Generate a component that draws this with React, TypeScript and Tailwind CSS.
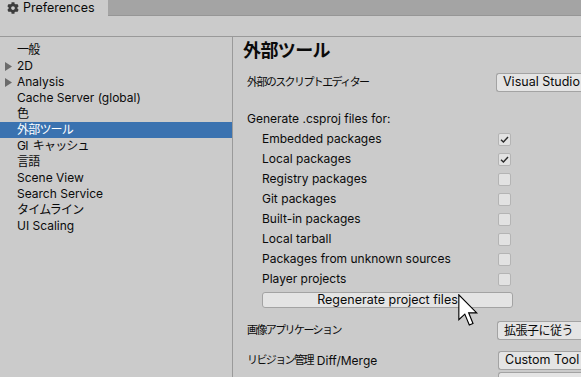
import React from "react";
import { FaCog } from "react-icons/fa";

const font = { fontFamily: "Inter, 'Noto Sans CJK JP', sans-serif" };

type NavItem = { label: string; arrow?: boolean; selected?: boolean; cjk?: boolean };

const navItems: NavItem[] = [
  { label: "一般", cjk: true },
  { label: "2D", arrow: true },
  { label: "Analysis", arrow: true },
  { label: "Cache Server (global)" },
  { label: "色", cjk: true },
  { label: "外部ツール", selected: true, cjk: true },
  { label: "GI  キャッシュ", cjk: true },
  { label: "言語", cjk: true },
  { label: "Scene View" },
  { label: "Search Service" },
  { label: "タイムライン", cjk: true },
  { label: "UI Scaling" },
];

const packages: { label: string; checked: boolean }[] = [
  { label: "Embedded packages", checked: true },
  { label: "Local packages", checked: true },
  { label: "Registry packages", checked: false },
  { label: "Git packages", checked: false },
  { label: "Built-in packages", checked: false },
  { label: "Local tarball", checked: false },
  { label: "Packages from unknown sources", checked: false },
  { label: "Player projects", checked: false },
];

const Checkbox: React.FC<{ checked: boolean }> = ({ checked }) => (
  <div className="w-[13px] h-[13px] rounded-[2px] border border-[#b4b4b4] bg-[#e2e2e2] grid place-items-center">
    {checked && (
      <svg width="9" height="7" viewBox="0 0 9 7">
        <path d="M1 3.8 L3.4 6 L8 1" fill="none" stroke="#2a2a2a" strokeWidth={1.4} />
      </svg>
    )}
  </div>
);

// runs off the right edge of the window, like the reference
const Dropdown: React.FC<{ value: string; cjk?: boolean; width: string }> = ({ value, cjk, width }) => (
  <div
    className={
      "ml-auto h-[19px] shrink-0 rounded-l-[3px] border border-r-0 border-[#a3a3a3] bg-[#e4e4e4] pl-[6px] flex items-center whitespace-nowrap overflow-hidden " +
      width
    }
  >
    <span className={cjk ? "text-[12px] tracking-[-0.5px]" : "text-[12.5px]"}>{value}</span>
  </div>
);

const Cursor = () => (
  <svg
    className="absolute left-[458px] top-[294px]"
    width="21"
    height="33"
    viewBox="0 0 13 20.5"
  >
    <path
      d="M0.5 0.5 L0.5 16 L4.2 12.5 L7 19.3 L9.3 18.3 L6.6 11.7 L11.6 11.7 Z"
      fill="#ffffff"
      stroke="#000000"
      strokeWidth={0.7}
      strokeLinejoin="miter"
    />
  </svg>
);

export default function App() {
  return (
    <div
      className="relative w-[581px] h-[377px] overflow-hidden bg-[#cbcbcb] text-[#0a0a0a] flex flex-col"
      style={font}
    >
      {/* tab strip */}
      <div className="h-[16px] flex bg-[#a4a4a4] shrink-0">
        <div className="w-[108px] h-[16px] bg-[#cbcbcb] flex items-center pl-[7px] gap-[4px]">
          <FaCog className="w-[12px] h-[12px] text-[#3c3c3c]" />
          <span className="text-[12.5px] leading-none">Preferences</span>
        </div>
        <div className="flex-1 border-b border-[#969696]" />
      </div>
      {/* toolbar */}
      <div className="h-[21px] shrink-0 border-b border-[#999999]" />

      <div className="flex flex-1 min-h-0">
        {/* side list */}
        <div className="w-[233px] shrink-0 border-r border-[#9a9a9a] pt-[5px]">
          {navItems.map((item) => (
            <div
              key={item.label}
              className={
                "h-[16px] flex items-center relative pl-[17px] text-[12px] whitespace-pre " +
                (item.selected ? "bg-[#3a72b0] text-white" : "")
              }
            >
              {item.arrow && (
                <svg
                  className="absolute left-[5px] top-[4px]"
                  width="7"
                  height="9"
                  viewBox="0 0 7 9"
                >
                  <path d="M0 0 L7 4.5 L0 9 Z" fill="#6b6b6b" />
                </svg>
              )}
              <span className={item.cjk ? "tracking-[-0.8px]" : ""}>{item.label}</span>
            </div>
          ))}
        </div>

        {/* settings panel */}
        <div className="flex-1 min-w-0 flex flex-col">
          <div className="mt-[1px] h-[24px] pl-[10px] flex items-center text-[18px] font-bold tracking-[-0.6px]">
            外部ツール
          </div>

          <div className="mt-[11px] h-[19px] pl-[14px] flex items-center">
            <span className="text-[11px] tracking-[-1.6px]">外部のスクリプトエディター</span>
            <Dropdown value="Visual Studio Code" width="w-[85px]" />
          </div>

          <div className="mt-[19px] h-[16px] pl-[14px] flex items-center text-[12px]">
            Generate .csproj files for:
          </div>

          <div className="mt-[2px] flex flex-col">
            {packages.map((p) => (
              <div key={p.label} className="h-[20px] pl-[29px] pr-[70px] flex items-center">
                <span className="text-[12px] whitespace-nowrap">{p.label}</span>
                <div className="ml-auto">
                  <Checkbox checked={p.checked} />
                </div>
              </div>
            ))}
          </div>

          <div className="mt-[3px] ml-[29px] w-[251px] h-[16px] rounded-[3px] border border-[#a3a3a3] bg-[#e4e4e4] flex items-center justify-center text-[12.5px]">
            Regenerate project files
          </div>

          <div className="mt-[13px] h-[19px] pl-[14px] flex items-center">
            <span className="text-[11px] tracking-[-1.6px]">画像アプリケーション</span>
            <Dropdown value="拡張子に従う" cjk width="w-[84px]" />
          </div>

          <div className="mt-[11px] h-[19px] pl-[14px] flex items-center">
            <div className="flex items-center gap-[4px] whitespace-nowrap leading-none">
              <span className="text-[11px] tracking-[-1.6px]">リビジョン管理</span>
              <span className="text-[12px]">Diff/Merge</span>
            </div>
            <Dropdown value="Custom Tool" width="w-[83px]" />
          </div>

          <div className="mt-[2px] h-[19px] pl-[14px] flex items-center">
            <span className="text-[12px]">Tool Path</span>
            <div className="ml-auto w-[83px] h-[19px] rounded-l-[3px] border border-r-0 border-[#a3a3a3] bg-[#e4e4e4]" />
          </div>
        </div>
      </div>

      <Cursor />
    </div>
  );
}
